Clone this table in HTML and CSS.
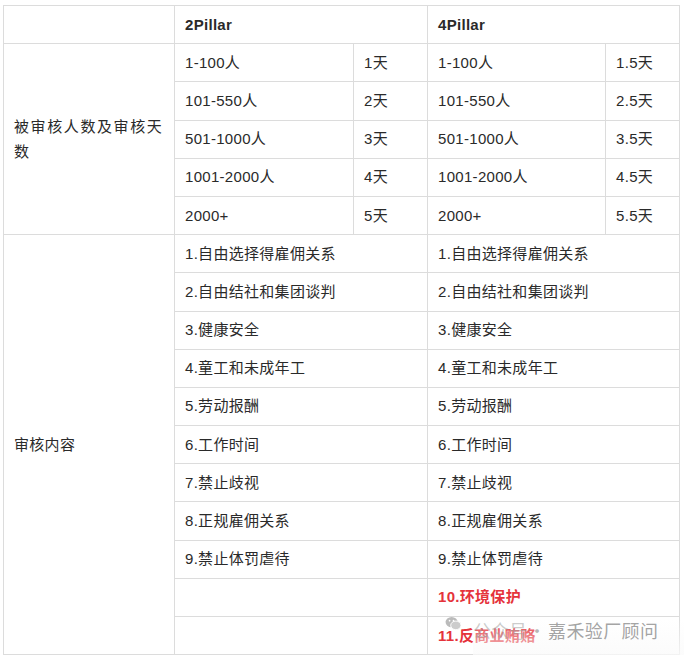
FILE: index.html
```html
<!DOCTYPE html>
<html>
<head>
<meta charset="utf-8">
<link rel="stylesheet" href="styles.css">
</head>
<body>
<div class="wrap">
<table class="tbl">
<colgroup>
<col class="c1"><col class="c2"><col class="c3"><col class="c4"><col class="c5">
</colgroup>
<tr><td></td><td colspan="2" class="hd">2Pillar</td><td colspan="2" class="hd">4Pillar</td></tr>
<tr><td rowspan="5" class="lbl lbl1">被审核人数及审核天数</td><td>1-100人</td><td>1天</td><td>1-100人</td><td>1.5天</td></tr>
<tr><td>101-550人</td><td>2天</td><td>101-550人</td><td>2.5天</td></tr>
<tr><td>501-1000人</td><td>3天</td><td>501-1000人</td><td>3.5天</td></tr>
<tr><td>1001-2000人</td><td>4天</td><td>1001-2000人</td><td>4.5天</td></tr>
<tr><td>2000+</td><td>5天</td><td>2000+</td><td>5.5天</td></tr>
<tr><td rowspan="11" class="lbl">审核内容</td><td colspan="2">1.自由选择得雇佣关系</td><td colspan="2">1.自由选择得雇佣关系</td></tr>
<tr><td colspan="2">2.自由结社和集团谈判</td><td colspan="2">2.自由结社和集团谈判</td></tr>
<tr><td colspan="2">3.健康安全</td><td colspan="2">3.健康安全</td></tr>
<tr><td colspan="2">4.童工和未成年工</td><td colspan="2">4.童工和未成年工</td></tr>
<tr><td colspan="2">5.劳动报酬</td><td colspan="2">5.劳动报酬</td></tr>
<tr><td colspan="2">6.工作时间</td><td colspan="2">6.工作时间</td></tr>
<tr><td colspan="2">7.禁止歧视</td><td colspan="2">7.禁止歧视</td></tr>
<tr><td colspan="2">8.正规雇佣关系</td><td colspan="2">8.正规雇佣关系</td></tr>
<tr><td colspan="2">9.禁止体罚虐待</td><td colspan="2">9.禁止体罚虐待</td></tr>
<tr><td colspan="2"></td><td colspan="2" class="red">10.环境保护</td></tr>
<tr><td colspan="2"></td><td colspan="2" class="red">11.反商业贿赂</td></tr>
</table>
<div class="fade"></div>
<div class="wm">
<svg class="wx" width="17" height="15" viewBox="0 0 18 16"><ellipse cx="7" cy="6.5" rx="6.5" ry="5.5" fill="#b0b0b0"/><ellipse cx="11.5" cy="10" rx="5.5" ry="4.6" fill="#c4c4c4" stroke="#fff" stroke-width="1"/><circle cx="4.8" cy="5" r="0.9" fill="#fff"/><circle cx="9" cy="5" r="0.9" fill="#fff"/></svg>
<span class="gzh">公众号</span>
<span class="dot">·</span>
<span class="name">嘉禾验厂顾问</span>
</div>
</div>
</body>
</html>
```
FILE: styles.css
```css
html, body { margin: 0; padding: 0; background: #fff; }
body { padding: 5px 0 0 3px; }
.wrap { position: relative; width: 676px; }
.tbl {
  border-collapse: collapse;
  table-layout: fixed;
  width: 676px;
  font-family: "Liberation Sans", "Noto Sans CJK SC", sans-serif;
  font-size: 15px;
  letter-spacing: 0.3px;
  color: #2a2a2a;
}
.c1 { width: 171px; }
.c2 { width: 179px; }
.c3 { width: 74px; }
.c4 { width: 178px; }
.c5 { width: 74px; }
.tbl tr { height: 38.2px; }
.tbl td {
  border: 1px solid #dcdcdc;
  padding: 0 10px;
  vertical-align: middle;
  line-height: 20px;
}
.hd { font-weight: bold; }
.lbl1 { letter-spacing: 1.6px; line-height: 25px !important; }
.red { color: #e5333b; font-weight: bold; }
.fade {
  position: absolute; left: 470px; right: -10px; bottom: -4px; height: 40px;
  background: linear-gradient(to bottom, rgba(255,255,255,0), rgba(250,250,250,0.85));
  pointer-events: none;
}
.wm {
  position: absolute; left: 442px; bottom: 12px;
  display: flex; align-items: center;
  font-family: "Noto Sans CJK SC", sans-serif; font-size: 18px;
  line-height: 26px;
  color: rgba(140,140,140,0.8);
}
.wx { opacity: 0.85; margin-right: 11px; margin-bottom: 12px; }
.gzh { color: rgba(160,160,160,0.55); letter-spacing: 0; }
.dot { margin: 0 2px 0 1px; color: rgba(150,150,150,0.7); }
.name { letter-spacing: 0.4px; }
```
